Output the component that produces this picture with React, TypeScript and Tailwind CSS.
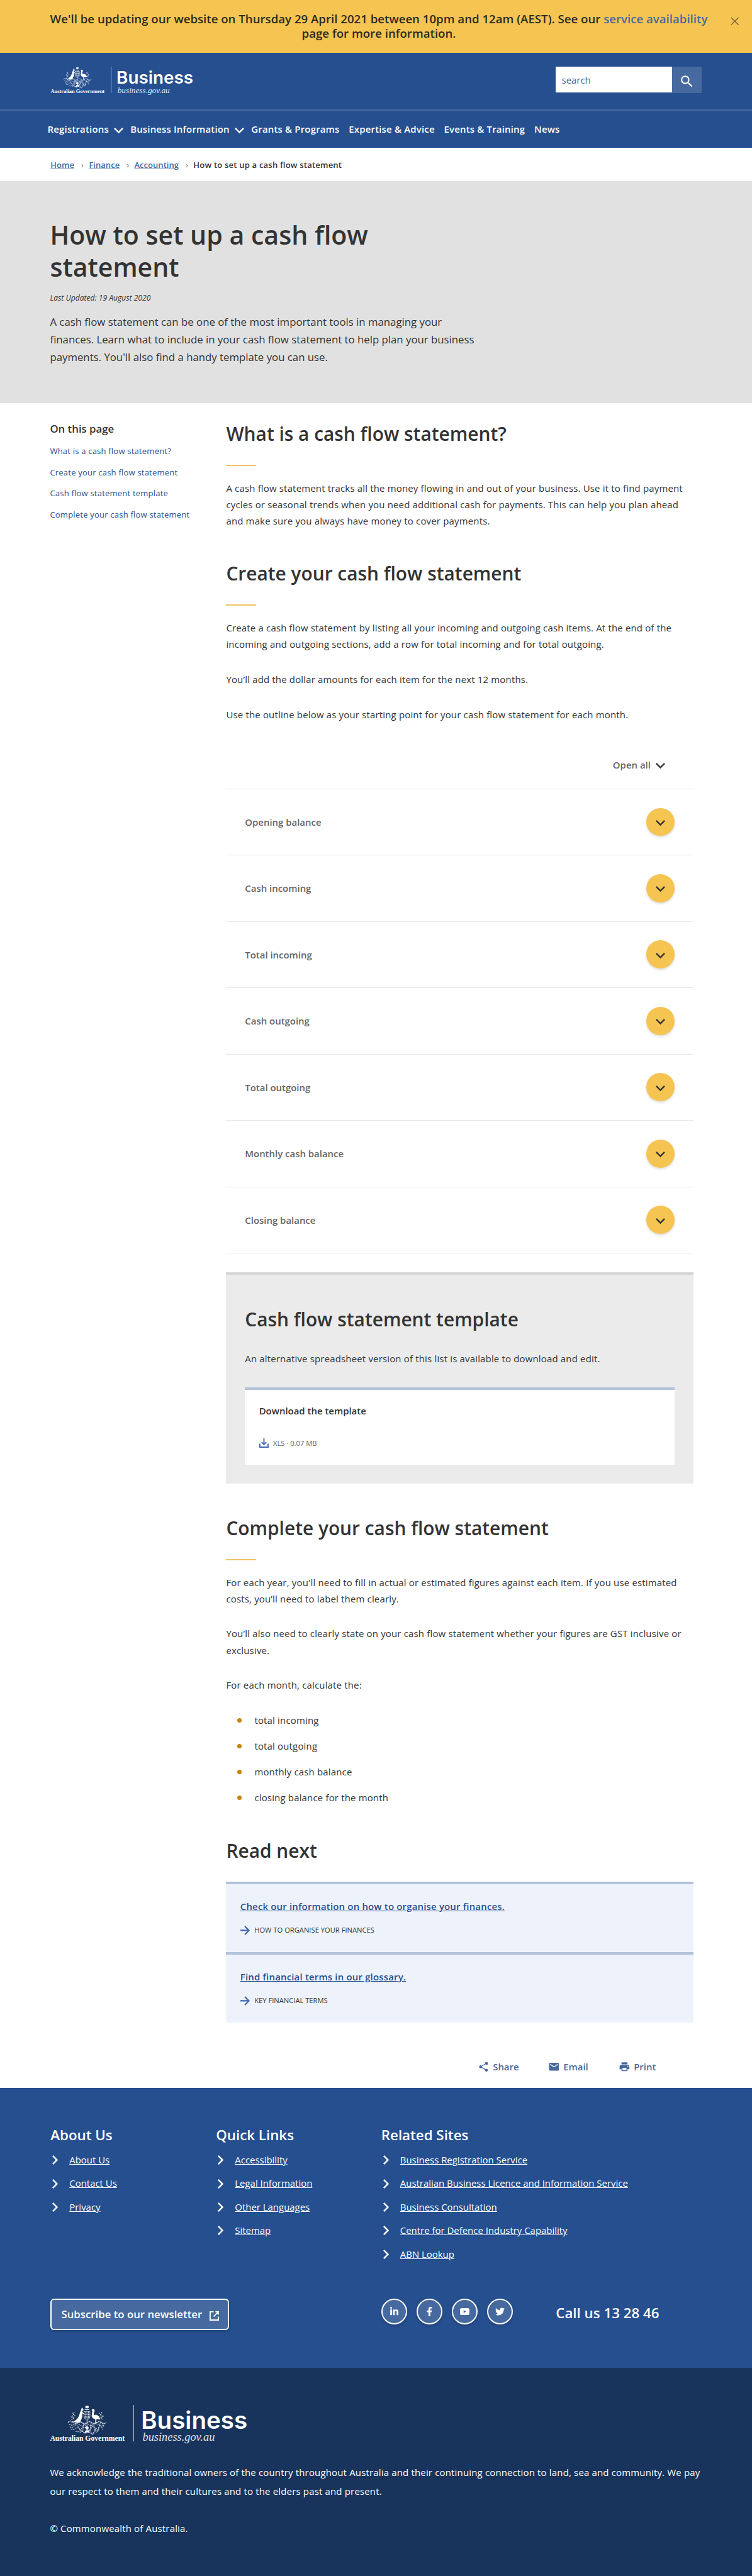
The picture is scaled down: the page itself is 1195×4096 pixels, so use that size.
import type { ReactNode } from 'react';
import { FaFacebookF, FaLinkedinIn, FaTwitter } from 'react-icons/fa';
import { MdEmail, MdPrint, MdSearch, MdShare } from 'react-icons/md';

function ChevronDown() {
  return (
    <svg viewBox="6 8.59 12 7.41" className="h-[9.2px] w-[14.9px] shrink-0 fill-current">
      <path d="M16.59 8.59 12 13.17 7.41 8.59 6 10l6 6 6-6z" />
    </svg>
  );
}

function ChevronRight() {
  return (
    <svg viewBox="8.59 6 7.41 12" className="h-[14.9px] w-[9.2px] shrink-0 fill-current">
      <path d="M10 6 8.59 7.41 13.17 12l-4.58 4.59L10 18l6-6z" />
    </svg>
  );
}

function ArrowRight() {
  return (
    <svg viewBox="0 0 16 16" className="size-[14.9px] shrink-0 fill-none stroke-[#3f66b3] stroke-[2.4]">
      <path d="M0 8h14M7.6 1l7 7-7 7" />
    </svg>
  );
}

function Crest() {
  return (
    <g>
      <path fill="#fff" d="M63.5 0l1 2.2 2.3-.7-1 2 1 2-2.3-.6-1 2.1-1-2.1-2.3.6 1-2-1-2 2.3.7z" />
      <path stroke="#fff" strokeWidth="1" d="M59.5 8h8" />
      <path fill="#fff" d="M54.8 4.2l1.4 1.7 1.2 1.8-.3 1.6-2.2.6 1.2 2.6 2.3 2.2-.6 1-2.7-1.4.4 5.2-1.6 5.2-2.2 4.4 1.4.9-5.6.2-4.6-1-8.2.9 7-2.2 5.4-4.4 3-5.6 1.6-5.2 1.8-4.4z" />
      <path fill="#fff" d="M71 8.3l2.6-1.4 2.2.8.8 2.2-1.6 4.2.4 3 4-.4 4.4 2.6 2.3 5.2-2.6.2-3.8-.6-.6 4.6 2.2 1.5h-4l.4-5.6-4.2-1.8-2.2-3.6.8-5.4.6-3.6z" />
      <g fill="none" stroke="#fff" strokeWidth="1" strokeDasharray="2.8 .7" opacity=".9">
        <path d="M58.5 11h10v7.5q0 5-5 7.8-5-2.800-5-7.800zM63.500 11v15M58.500 16h10M58.500 20.500h10M61 11v12M66 11v12" />
        <path d="M38 13l3 3-3 3 4 3-5 3M42 12l-2 4 4 3M36 20l4 2M89 12l-2 4 3 3-4 3 5 3M84 13l3 5M92 19l-4 3" />
        <path d="M31 30q4-5 8-1t8 1 8 0 8.500 0 8.500 0 8 0 8 0 8.500 0" strokeWidth="1.300" />
        <path d="M33 33q5 3 9 0t9 1 8 0 8 0 8 0 9 0 9-1" />
        <path d="M34 37q5 4 8-1t7 2 7-1 7 2 7-1 7 1 7-2 8 0" />
        <path d="M36 41q4 3 8-1t7 2 6-1 6 1 7-1 7 1 6-2 7 2" />
        <path d="M44 45q4 2 7-1t6 2 6-2 7 2 6-1 7-1" />
        <path d="M51 47q5-3 8 0t4-1 5 1 7-1" />
        <path d="M63.500 27v20M56 31q4 5 0 9M71 31q-4 5 0 9" />
      </g>
      <path fill="#fff" d="M60.500 38l3-2 3 2-.8 3h-4.400zM61 43.500h5l2 4.500-4.500-1.500L59 48z" opacity=".95" />
    </g>
  );
}

function Logo({ className }: { className: string }) {
  return (
    <svg viewBox="0 0 337 68" className={className} fill="#fff">
      <Crest />
      <text x="0.5" y="61.5" textLength="127" lengthAdjust="spacingAndGlyphs" className="font-['Liberation_Serif',serif] text-[12.5px] font-bold">Australian Government</text>
      <path d="M143 0v62" stroke="#fff" strokeWidth="1.2" opacity=".7" />
      <text x="155.5" y="40.3" textLength="181" lengthAdjust="spacingAndGlyphs" className="font-['Inter',sans-serif] text-[40.500px] font-semibold">Business</text>
      <text x="158" y="61.5" textLength="123" lengthAdjust="spacingAndGlyphs" opacity=".85" className="font-['Liberation_Serif',serif] text-[20px] italic">business.gov.au</text>
    </svg>
  );
}

function Heading({ children, rule = false }: { children: ReactNode; rule?: boolean }) {
  return (
    <>
      <h2 className="text-[29.87px] leading-[37.34px] font-semibold">{children}</h2>
      {rule && <div className="mt-[30.7px] h-[2px] w-[48px] bg-[#edc565]" />}
    </>
  );
}

const accordion = ['Opening balance', 'Cash incoming', 'Total incoming', 'Cash outgoing', 'Total outgoing', 'Monthly cash balance', 'Closing balance'];

const footerColumns = [
  { title: 'About Us', links: ['About Us', 'Contact Us', 'Privacy'] },
  { title: 'Quick Links', links: ['Accessibility', 'Legal Information', 'Other Languages', 'Sitemap'] },
  {
    title: 'Related Sites',
    links: ['Business Registration Service', 'Australian Business Licence and Information Service', 'Business Consultation', 'Centre for Defence Industry Capability', 'ABN Lookup'],
  },
];

function NextCard({ title, label }: { title: string; label: string }) {
  return (
    <a className="block h-[112px] border-t-4 border-[#b2c2da] bg-[#eef3fb] px-[22.4px] pt-[22px]">
      <span className="block text-[14.94px] leading-[26.1px] font-semibold tracking-[0.187px] text-[#264f90] underline">{title}</span>
      <span className="mt-[16.2px] flex items-center gap-[7.5px] text-[11.2px] leading-[18.7px] tracking-normal">
        <ArrowRight />
        {label}
      </span>
    </a>
  );
}

function Social({ children }: { children: ReactNode }) {
  return (
    <a className="flex size-[41px] items-center justify-center rounded-full border-2 border-white bg-[#466a9f] text-[15px] shadow-[0_2px_4px_rgba(0,0,0,0.2)]">
      {children}
    </a>
  );
}

export default function App() {
  return (
    <div className="flex h-[4096px] w-[1195px] flex-col overflow-hidden bg-white font-['Open_Sans',sans-serif] text-[14.94px] leading-[26.140px] text-[#333]">
      <div className="relative h-[84px] shrink-0 bg-[#f5c451] pt-[18.1px] pr-[70px] pl-[79px] text-center text-[18.65px] leading-[23.34px] font-semibold whitespace-nowrap text-[#2b2a1f]">
        We'll be updating our website on Thursday 29 April 2021 between 10pm and 12am (AEST). See our{' '}
        <a className="text-[#466a9f]">service availability</a>
        <br />
        page for more information.
        <svg viewBox="0 0 14 14" className="absolute top-[27px] right-[20.5px] size-[13.5px] stroke-[#7b6a3a] stroke-[1.7]">
          <path d="M1 1l12 12M13 1L1 13" />
        </svg>
      </div>

      <header className="shrink-0 bg-[#264f90] text-white">
        <div className="flex h-[91.5px] items-start justify-between border-b-[2px] border-[#466a9f] pt-[22.4px] pr-[80.3px] pl-[80.3px]">
          <Logo className="h-[45.900px] w-[227.600px]" />
          <div className="flex items-start">
            <div className="flex h-[41px] w-[184.8px] items-center bg-white pl-[9.3px] text-[#466a9f]">search</div>
            <button className="flex h-[42px] w-[46.7px] items-center justify-center bg-[#466a9f] pt-[4px] text-[25px]">
              <MdSearch />
            </button>
          </div>
        </div>
        <nav className="flex h-[59.7px] items-center pl-[75.6px] font-semibold tracking-[0.187px]">
          <a>Registrations</a>
          <span className="mr-[11.2px] ml-[8.200px] pt-1"><ChevronDown /></span>
          <a>Business Information</a>
          <span className="mr-[11.2px] ml-[8.400px] pt-1"><ChevronDown /></span>
          <div className="flex gap-[14.8px]">
            <a>Grants &amp; Programs</a>
            <a>Expertise &amp; Advice</a>
            <a>Events &amp; Training</a>
            <a>News</a>
          </div>
        </nav>
      </header>

      <nav className="flex h-[53.2px] shrink-0 items-center pl-[80.3px] text-[13.07px] font-semibold">
        {['Home', 'Finance', 'Accounting'].map((c) => (
          <span key={c} className="flex items-center">
            <a className="text-[#466a9f] underline">{c}</a>
            <span className="w-[23.3px] pl-[11px] font-normal text-[#777]">›</span>
          </span>
        ))}
        <span className="tracking-[0.187px]">How to set up a cash flow statement</span>
      </nav>

      <section className="h-[352.6px] shrink-0 bg-[#e1e1e1] pt-[59.6px] pl-[79.400px] whitespace-nowrap">
        <h1 className="text-[41.08px] leading-[51.34px] font-semibold">How to set up a cash flow<br />statement</h1>
        <p className="mt-[14.2px] text-[12.14px] leading-[18.7px] italic">Last Updated: 19 August 2020</p>
        <p className="mt-[14.3px] text-[16.8px] leading-[28px]">
          A cash flow statement can be one of the most important tools in managing your<br />
          finances. Learn what to include in your cash flow statement to help plan your business<br />
          payments. You'll also find a handy template you can use.
        </p>
      </section>

      <main className="flex h-[2679.3px] shrink-0 pl-[79.4px]">
        <aside className="w-[280px] shrink-0 pt-[28.3px]">
          <h3 className="text-[16.8px] leading-[26.1px] font-semibold">On this page</h3>
          <ul className="mt-[5.6px] text-[13.07px] leading-[33.6px] tracking-[0.187px] text-[#264f90]">
            <li>What is a cash flow statement?</li>
            <li>Create your cash flow statement</li>
            <li>Cash flow statement template</li>
            <li>Complete your cash flow statement</li>
          </ul>
        </aside>

        <article className="w-[742.2px] shrink-0 pt-[29.8px] tracking-[0.187px]">
          <div className="tracking-normal"><Heading rule>What is a cash flow statement?</Heading></div>
          <p className="mt-[21.9px]">
            A cash flow statement tracks all the money flowing in and out of your business. Use it to find payment<br />
            cycles or seasonal trends when you need additional cash for payments. This can help you plan ahead<br />
            and make sure you always have money to cover payments.
          </p>

          <div className="mt-[51.7px] tracking-normal"><Heading rule>Create your cash flow statement</Heading></div>
          <p className="mt-[22px]">
            Create a cash flow statement by listing all your incoming and outgoing cash items. At the end of the<br />
            incoming and outgoing sections, add a row for total incoming and for total outgoing.
          </p>
          <p className="mt-[29.87px]">You’ll add the dollar amounts for each item for the next 12 months.</p>
          <p className="mt-[29.87px]">Use the outline below as your starting point for your cash flow statement for each month.</p>

          <div className="mt-[54.2px] flex h-[50.4px] items-start justify-end gap-[8px] pr-[44.8px] font-semibold tracking-normal">
            <span className="text-[#666]">Open all</span>
            <span className="pt-[10px]"><ChevronDown /></span>
          </div>
          <div className="border-b border-[#e6e6e6] tracking-normal">
            {accordion.map((item) => (
              <div key={item} className="flex h-[105.48px] items-center justify-between border-t border-[#e6e6e6] px-[29.87px] font-semibold text-[#666]">
                {item}
                <button className="flex size-[44.8px] items-center justify-center rounded-full bg-[#f5c451] pt-[3px] text-[#333] shadow-[0_2px_4px_rgba(0,0,0,0.15)]">
                  <ChevronDown />
                </button>
              </div>
            ))}
          </div>

          <section className="mt-[29.9px] h-[336px] border-t-4 border-[#d6d6d6] bg-[#ebebeb] px-[29.87px] pt-[51.8px]">
            <div className="tracking-normal"><Heading>Cash flow statement template</Heading></div>
            <p className="mt-[31.3px]">An alternative spreadsheet version of this list is available to download and edit.</p>
            <div className="mt-[32.1px] h-[123.3px] border-t-4 border-[#b2c2da] bg-white px-[22.4px] pt-[20.6px] tracking-normal">
              <p className="font-semibold">Download the template</p>
              <p className="mt-[29.3px] flex items-center gap-[7.5px] text-[11.2px] leading-[18.7px] text-[#666]">
                <svg viewBox="0 0 16 16" className="size-[14.9px] shrink-0 fill-none stroke-[#3f66b3] stroke-2">
                  <path d="M1 9v6h14V9M8 0v10M4 6.500l4 4 4-4" />
                </svg>
                XLS · 0.07 MB
              </p>
            </div>
          </section>

          <div className="mt-[52.1px] tracking-normal"><Heading rule>Complete your cash flow statement</Heading></div>
          <p className="mt-[21.6px]">
            For each year, you'll need to fill in actual or estimated figures against each item. If you use estimated<br />
            costs, you’ll need to label them clearly.
          </p>
          <p className="mt-[29.5px]">
            You’ll also need to clearly state on your cash flow statement whether your figures are GST inclusive or<br />
            exclusive.
          </p>
          <p className="mt-[29.5px]">For each month, calculate the:</p>
          <ul className="mt-[29.87px] flex flex-col gap-[14.93px]">
            {['total incoming', 'total outgoing', 'monthly cash balance', 'closing balance for the month'].map((t) => (
              <li key={t} className="flex items-center pl-[17.7px]">
                <span className="mt-[1px] mr-[20.3px] size-[7px] rounded-full bg-[#c88400]" />
                {t}
              </li>
            ))}
          </ul>

          <div className="mt-[53px] tracking-normal"><Heading>Read next</Heading></div>
          <div className="mt-[30.2px]">
            <NextCard title="Check our information on how to organise your finances." label="HOW TO ORGANISE YOUR FINANCES" />
            <NextCard title="Find financial terms in our glossary." label="KEY FINANCIAL TERMS" />
          </div>
          <div className="mt-[56.8px] flex pl-[399.5px] font-semibold tracking-normal text-[#466a9f]">
            <a className="flex w-[112px] items-center gap-[5.6px]"><MdShare className="size-[18.7px]" />Share</a>
            <a className="flex w-[112px] items-center gap-[5.6px]"><MdEmail className="size-[18.7px]" />Email</a>
            <a className="flex w-[112px] items-center gap-[5.6px]"><MdPrint className="size-[18.7px]" />Print</a>
          </div>
        </article>
      </main>

      <footer className="flex flex-1 flex-col text-white">
        <div className="h-[444.4px] shrink-0 bg-[#264f90] pt-[59.4px] pl-[80.3px]">
          <div className="grid h-[223.3px] grid-cols-[263px_262.500px_1fr]">
            {footerColumns.map((col) => (
              <div key={col.title}>
                <h3 className="text-[22.3px] leading-[29.87px] font-semibold">{col.title}</h3>
                <ul className="mt-[6.6px] leading-[37.34px]">
                  {col.links.map((l) => (
                    <li key={l} className="flex items-center gap-[18px] pl-[2.8px]">
                      <ChevronRight />
                      <a className="underline">{l}</a>
                    </li>
                  ))}
                </ul>
              </div>
            ))}
          </div>
          <div className="mt-[52.4px] flex items-start">
            <button className="flex h-[49.5px] w-[284px] items-center rounded-[6px] border-2 border-white bg-[#466a9f] pl-[15.2px] text-[16.8px] font-semibold shadow-[0_2px_4px_rgba(0,0,0,0.2)]">
              Subscribe to our newsletter
              <svg viewBox="0 0 16 16" className="mt-[5px] ml-[12px] size-[14.9px] fill-none stroke-white stroke-2">
                <path d="M7 1H1v14h14V9M7 9l7.500-7.500M10 1h5v5" />
              </svg>
            </button>
            <div className="ml-[241.500px] flex gap-[15px]">
              <Social><FaLinkedinIn /></Social>
              <Social><FaFacebookF /></Social>
              <Social>
                <svg viewBox="0 0 16 12" className="h-[11.2px] w-[14.9px]">
                  <rect width="16" height="12" rx="3" className="fill-white" />
                  <path d="M6.200 3.500v5l4.200-2.500z" className="fill-[#466a9f]" />
                </svg>
              </Social>
              <Social><FaTwitter /></Social>
            </div>
            <span className="mt-[7.2px] ml-[68.500px] text-[22.3px] leading-[29.87px] font-semibold">Call us 13 28 46</span>
          </div>
        </div>

        <div className="flex-1 bg-[#19345c] pt-[59.7px] pl-[79.4px]">
          <Logo className="h-[63.5px] w-[314.600px]" />
          <p className="mt-[28.8px] leading-[29.87px] tracking-[0.187px] whitespace-nowrap">
            We acknowledge the traditional owners of the country throughout Australia and their continuing connection to land, sea and community. We pay<br />
            our respect to them and their cultures and to the elders past and present.
          </p>
          <p className="mt-[29.87px] leading-[29.87px] tracking-[0.187px]">© Commonwealth of Australia.</p>
        </div>
      </footer>
    </div>
  );
}
